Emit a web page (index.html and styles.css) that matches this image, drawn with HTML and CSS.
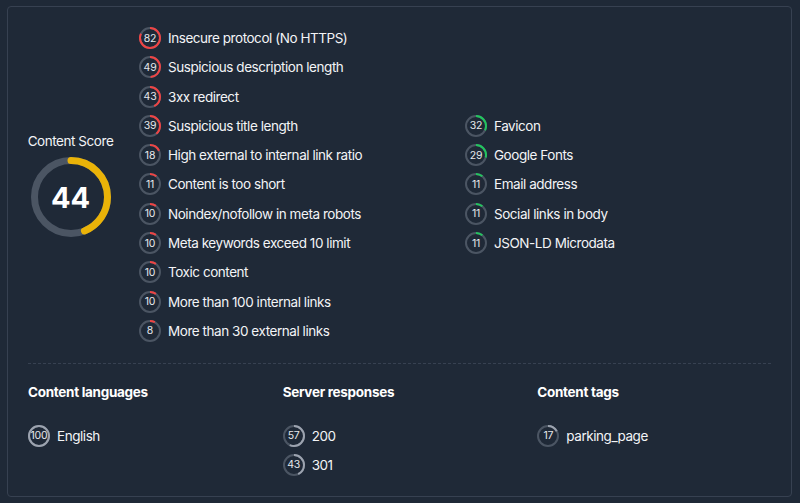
FILE: index.html
```html
<!DOCTYPE html>
<html>
<head>
<meta charset="utf-8">
<link rel="stylesheet" href="styles.css">
</head>
<body>
<div class="card">
  <div class="top">
    <div class="score">
      <div class="score-label">Content Score</div>
      <div class="gauge">
        <svg width="80" height="80" viewBox="0 0 80 80">
          <circle cx="40" cy="40" r="36.5" fill="none" stroke="#4b5563" stroke-width="7"/>
          <circle cx="40" cy="40" r="36.5" fill="none" stroke="#eab308" stroke-width="7" pathLength="100" stroke-dasharray="44 100" stroke-linecap="round" transform="rotate(-90 40 40)"/>
        </svg>
        <span class="gauge-num">44</span>
      </div>
    </div>
    <ul class="list list-left">
      <li><span class="ring"><svg viewBox="0 0 22 22"><circle class="trk" cx="11" cy="11" r="10"/><circle class="prg red" cx="11" cy="11" r="10" pathLength="100" stroke-dasharray="82 100"/></svg><b>82</b></span>Insecure protocol (No HTTPS)</li>
      <li><span class="ring"><svg viewBox="0 0 22 22"><circle class="trk" cx="11" cy="11" r="10"/><circle class="prg red" cx="11" cy="11" r="10" pathLength="100" stroke-dasharray="49 100"/></svg><b>49</b></span>Suspicious description length</li>
      <li><span class="ring"><svg viewBox="0 0 22 22"><circle class="trk" cx="11" cy="11" r="10"/><circle class="prg red" cx="11" cy="11" r="10" pathLength="100" stroke-dasharray="43 100"/></svg><b>43</b></span>3xx redirect</li>
      <li><span class="ring"><svg viewBox="0 0 22 22"><circle class="trk" cx="11" cy="11" r="10"/><circle class="prg red" cx="11" cy="11" r="10" pathLength="100" stroke-dasharray="39 100"/></svg><b>39</b></span>Suspicious title length</li>
      <li><span class="ring"><svg viewBox="0 0 22 22"><circle class="trk" cx="11" cy="11" r="10"/><circle class="prg red" cx="11" cy="11" r="10" pathLength="100" stroke-dasharray="18 100"/></svg><b>18</b></span>High external to internal link ratio</li>
      <li><span class="ring"><svg viewBox="0 0 22 22"><circle class="trk" cx="11" cy="11" r="10"/><circle class="prg red" cx="11" cy="11" r="10" pathLength="100" stroke-dasharray="11 100"/></svg><b>11</b></span>Content is too short</li>
      <li><span class="ring"><svg viewBox="0 0 22 22"><circle class="trk" cx="11" cy="11" r="10"/><circle class="prg red" cx="11" cy="11" r="10" pathLength="100" stroke-dasharray="10 100"/></svg><b>10</b></span>Noindex/nofollow in meta robots</li>
      <li><span class="ring"><svg viewBox="0 0 22 22"><circle class="trk" cx="11" cy="11" r="10"/><circle class="prg red" cx="11" cy="11" r="10" pathLength="100" stroke-dasharray="10 100"/></svg><b>10</b></span>Meta keywords exceed 10 limit</li>
      <li><span class="ring"><svg viewBox="0 0 22 22"><circle class="trk" cx="11" cy="11" r="10"/><circle class="prg red" cx="11" cy="11" r="10" pathLength="100" stroke-dasharray="10 100"/></svg><b>10</b></span>Toxic content</li>
      <li><span class="ring"><svg viewBox="0 0 22 22"><circle class="trk" cx="11" cy="11" r="10"/><circle class="prg red" cx="11" cy="11" r="10" pathLength="100" stroke-dasharray="10 100"/></svg><b>10</b></span>More than 100 internal links</li>
      <li><span class="ring"><svg viewBox="0 0 22 22"><circle class="trk" cx="11" cy="11" r="10"/><circle class="prg red" cx="11" cy="11" r="10" pathLength="100" stroke-dasharray="8 100"/></svg><b>8</b></span>More than 30 external links</li>
    </ul>
    <ul class="list list-right">
      <li><span class="ring"><svg viewBox="0 0 22 22"><circle class="trk" cx="11" cy="11" r="10"/><circle class="prg green" cx="11" cy="11" r="10" pathLength="100" stroke-dasharray="32 100"/></svg><b>32</b></span>Favicon</li>
      <li><span class="ring"><svg viewBox="0 0 22 22"><circle class="trk" cx="11" cy="11" r="10"/><circle class="prg green" cx="11" cy="11" r="10" pathLength="100" stroke-dasharray="29 100"/></svg><b>29</b></span>Google Fonts</li>
      <li><span class="ring"><svg viewBox="0 0 22 22"><circle class="trk" cx="11" cy="11" r="10"/><circle class="prg green" cx="11" cy="11" r="10" pathLength="100" stroke-dasharray="11 100"/></svg><b>11</b></span>Email address</li>
      <li><span class="ring"><svg viewBox="0 0 22 22"><circle class="trk" cx="11" cy="11" r="10"/><circle class="prg green" cx="11" cy="11" r="10" pathLength="100" stroke-dasharray="11 100"/></svg><b>11</b></span>Social links in body</li>
      <li><span class="ring"><svg viewBox="0 0 22 22"><circle class="trk" cx="11" cy="11" r="10"/><circle class="prg green" cx="11" cy="11" r="10" pathLength="100" stroke-dasharray="11 100"/></svg><b>11</b></span>JSON-LD Microdata</li>
    </ul>
  </div>
  <div class="bottom">
    <div class="col">
      <h3>Content languages</h3>
      <ul class="list">
        <li><span class="ring"><svg viewBox="0 0 22 22"><circle class="trk" cx="11" cy="11" r="10"/><circle class="prg grey" cx="11" cy="11" r="10" pathLength="100" stroke-dasharray="100 100"/></svg><b>100</b></span>English</li>
      </ul>
    </div>
    <div class="col">
      <h3>Server responses</h3>
      <ul class="list">
        <li><span class="ring"><svg viewBox="0 0 22 22"><circle class="trk" cx="11" cy="11" r="10"/><circle class="prg grey" cx="11" cy="11" r="10" pathLength="100" stroke-dasharray="57 100"/></svg><b>57</b></span>200</li>
        <li><span class="ring"><svg viewBox="0 0 22 22"><circle class="trk" cx="11" cy="11" r="10"/><circle class="prg grey" cx="11" cy="11" r="10" pathLength="100" stroke-dasharray="43 100"/></svg><b>43</b></span>301</li>
      </ul>
    </div>
    <div class="col">
      <h3>Content tags</h3>
      <ul class="list">
        <li><span class="ring"><svg viewBox="0 0 22 22"><circle class="trk" cx="11" cy="11" r="10"/><circle class="prg grey" cx="11" cy="11" r="10" pathLength="100" stroke-dasharray="17 100"/></svg><b>17</b></span>parking_page</li>
      </ul>
    </div>
  </div>
</div>
</body>
</html>
```

FILE: styles.css
```css
html, body {
  margin: 0;
  background: #1f2937;
}
body {
  padding: 6px 8px 6px 7px;
  font-family: Inter, "Noto Sans", sans-serif;
  color: #f3f4f6;
  font-size: 13.5px;
  letter-spacing: -0.45px;
}
.card {
  border: 1px solid #374151;
  border-radius: 4px;
  padding: 20px 20px 19px 20px;
  height: 491px;
  box-sizing: border-box;
}
.top {
  display: flex;
  align-items: center;
  padding-bottom: 21px;
  border-bottom: 1px dashed #374151;
}
.score {
  width: 85px;
  margin-right: 26px;
  display: flex;
  flex-direction: column;
  align-items: center;
  gap: 6px;
}
.score-label {
  line-height: 20px;
  white-space: nowrap;
}
.gauge {
  display: grid;
  width: 80px;
  height: 80px;
}
.gauge svg, .gauge-num {
  grid-area: 1 / 1;
}
.gauge-num {
  place-self: center;
  font-size: 29px;
  font-weight: 700;
  color: #ffffff;
  letter-spacing: 0;
}
.list {
  list-style: none;
  margin: 0;
  padding: 0;
  display: flex;
  flex-direction: column;
  gap: 7.3px;
}
.list-left {
  width: 326px;
}
.list li {
  display: flex;
  align-items: center;
  gap: 7px;
  height: 22px;
  white-space: nowrap;
}
.ring {
  display: grid;
  width: 22px;
  height: 22px;
  flex: none;
}
.ring svg, .ring b {
  grid-area: 1 / 1;
}
.ring svg {
  width: 22px;
  height: 22px;
  transform: rotate(-90deg);
}
.ring b {
  place-self: center;
  font-weight: 400;
  font-size: 10.5px;
  color: #e5e7eb;
  letter-spacing: -0.2px;
}
.trk {
  fill: none;
  stroke: #4b5563;
  stroke-width: 2;
}
.prg {
  fill: none;
  stroke-width: 2;
}
.red { stroke: #ef4444; }
.green { stroke: #22c55e; }
.grey { stroke: #9ca3af; }
.bottom {
  display: grid;
  grid-template-columns: repeat(3, 1fr);
  column-gap: 21px;
  padding-top: 18px;
}
.col h3 {
  margin: 0 0 23px;
  font-size: 13.5px;
  line-height: 20px;
  font-weight: 700;
  color: #ffffff;
  letter-spacing: -0.3px;
}
.col .list {
  gap: 7px;
}
```
